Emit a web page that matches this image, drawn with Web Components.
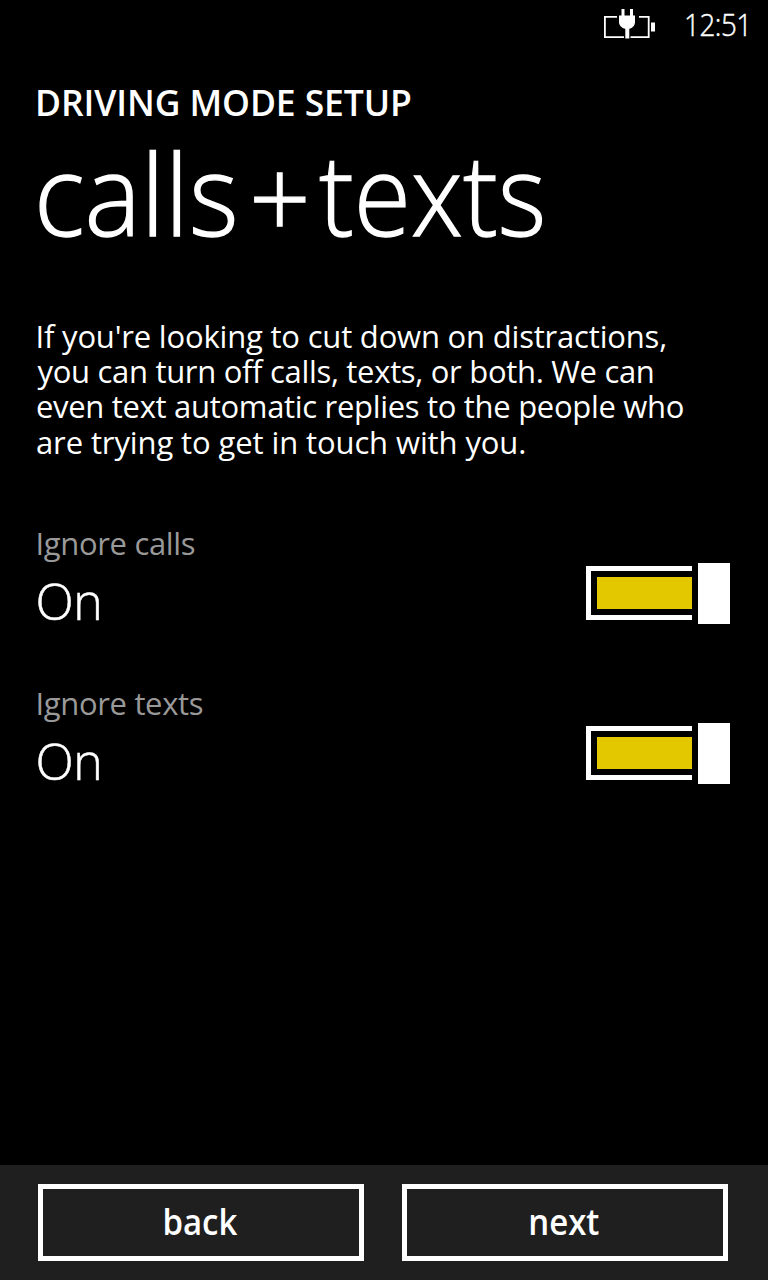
<!DOCTYPE html>
<html lang="en"><head><meta charset="utf-8"><title>Driving mode setup</title>
<style>
html,body{margin:0;background:#000}
body{font-family:"Open Sans","Noto Sans",sans-serif;color:#fff}
</style></head><body>
<setup-page></setup-page>
<script>
const define=(name,html)=>{
  const t=document.createElement('template');t.innerHTML=html;
  customElements.define(name,class extends HTMLElement{
    constructor(){super();this.attachShadow({mode:'open'}).append(t.content.cloneNode(true));}
  });
};
define('status-bar',`<style>
:host{display:flex;height:48px;box-sizing:border-box;padding-left:604px}
svg{display:block;width:52px;height:48px;flex:none}
.clock{margin-left:28px;font-size:31.5px;line-height:48px;font-weight:300;letter-spacing:-.5px;-webkit-text-stroke:.45px #fff;transform:scaleX(.88);transform-origin:left;white-space:nowrap}
</style>
<svg viewBox="0 0 52 48" fill="none" stroke="#fff">
<path d="M13 16.9H.9V37.1H20M35 16.9H44.7V37.1H26.500" stroke-width="1.8"/>
<path d="M47 22.500h4v9h-4z" fill="#fff" stroke="none"/>
<path d="M17.5 9h3v6.500h5.500V9h3v6.500H31V22c0 3.500-2.500 6-5.700 6.800V38.500h-4V28.800c-3.500-.800-6.300-3.300-6.300-6.800V15.500h2.500z" fill="#fff" stroke="none"/>
</svg><span class="clock">12:51</span>`);
define('page-title',`<style>
:host{display:block;padding-top:30px}
.over{margin-left:35px;font-size:35.5px;line-height:48px;font-weight:600;letter-spacing:-.1px;white-space:nowrap}
.title{display:flex;margin:7px 0 1px 33.500px;font-size:112.500px;line-height:120px;font-weight:300;height:120px;-webkit-text-stroke:1.3px #fff}
.title span{transform-origin:left}
.a{width:215.500px;transform:scaleX(.945)}.p{width:70px;padding-top:3px;transform:scaleX(.96)}.c{transform:scaleX(.926)}
</style><div class="over"><slot name="over"></slot></div>
<div class="title"><span class="a">calls</span><span class="p">+</span><span class="c">texts</span></div>`);
define('intro-text',`<style>
:host{display:block;padding:65px 0 0 36px;font-size:31px;line-height:35.2px;font-weight:400;white-space:nowrap}
p{margin:0}
.l1{margin-left:-.5px;letter-spacing:-.190px}.l2{margin-left:1.500px;letter-spacing:-.310px}.l3{letter-spacing:-.310px}.l4{letter-spacing:-.110px}
</style><p class="l1">If you're looking to cut down on distractions,</p><p class="l2">you can turn off calls, texts, or both. We can</p><p class="l3">even text automatic replies to the people who</p><p class="l4">are trying to get in touch with you.</p>`);
define('toggle-switch',`<style>
:host{display:flex;gap:6px;width:144px;height:61px;align-items:flex-start}
.track{box-sizing:border-box;width:106px;height:54px;margin-top:3px;border:5px solid #fff;border-right:0;padding:6px 0 6px 6px}
.fill{height:32px;background:#e3c800}
.thumb{width:32px;height:61px;background:#fff}
</style><div class="track"><div class="fill"></div></div><div class="thumb"></div>`);
define('toggle-row',`<style>
:host{display:flex;justify-content:space-between;height:160px;padding:0 38px 0 35.500px}
.label{font-size:31px;line-height:40px;font-weight:400;color:#999;letter-spacing:-.340px}
.value{margin-top:8px;font-size:50px;line-height:60px;font-weight:300;letter-spacing:-.5px;-webkit-text-stroke:.5px #fff}
toggle-switch{margin-top:40px}
</style><div><div class="label"><slot></slot></div><div class="value">On</div></div><toggle-switch></toggle-switch>`);
define('outline-button',`<style>
:host{display:flex;box-sizing:border-box;width:326px;height:77px;border:5px solid #fff;justify-content:center;align-items:center;padding:0 2px 2px 0}
span{font-size:36px;line-height:49px;font-weight:600;transform:scaleX(.915)}
</style><span><slot></slot></span>`);
define('app-bar',`<style>
:host{display:flex;box-sizing:border-box;height:115px;gap:38px;padding:19px 38px 0;background:#1f1f1f}
</style><outline-button>back</outline-button><outline-button>next</outline-button>`);
define('setup-page',`<style>
:host{display:flex;flex-direction:column;width:768px;height:1280px;background:#000;overflow:hidden}
main{flex:1}
.rows{padding-top:63px}
</style><status-bar></status-bar><main><page-title><span slot="over">DRIVING MODE SETUP</span></page-title><intro-text></intro-text>
<div class="rows"><toggle-row>Ignore calls</toggle-row><toggle-row>Ignore texts</toggle-row></div></main><app-bar></app-bar>`);
</script></body></html>
